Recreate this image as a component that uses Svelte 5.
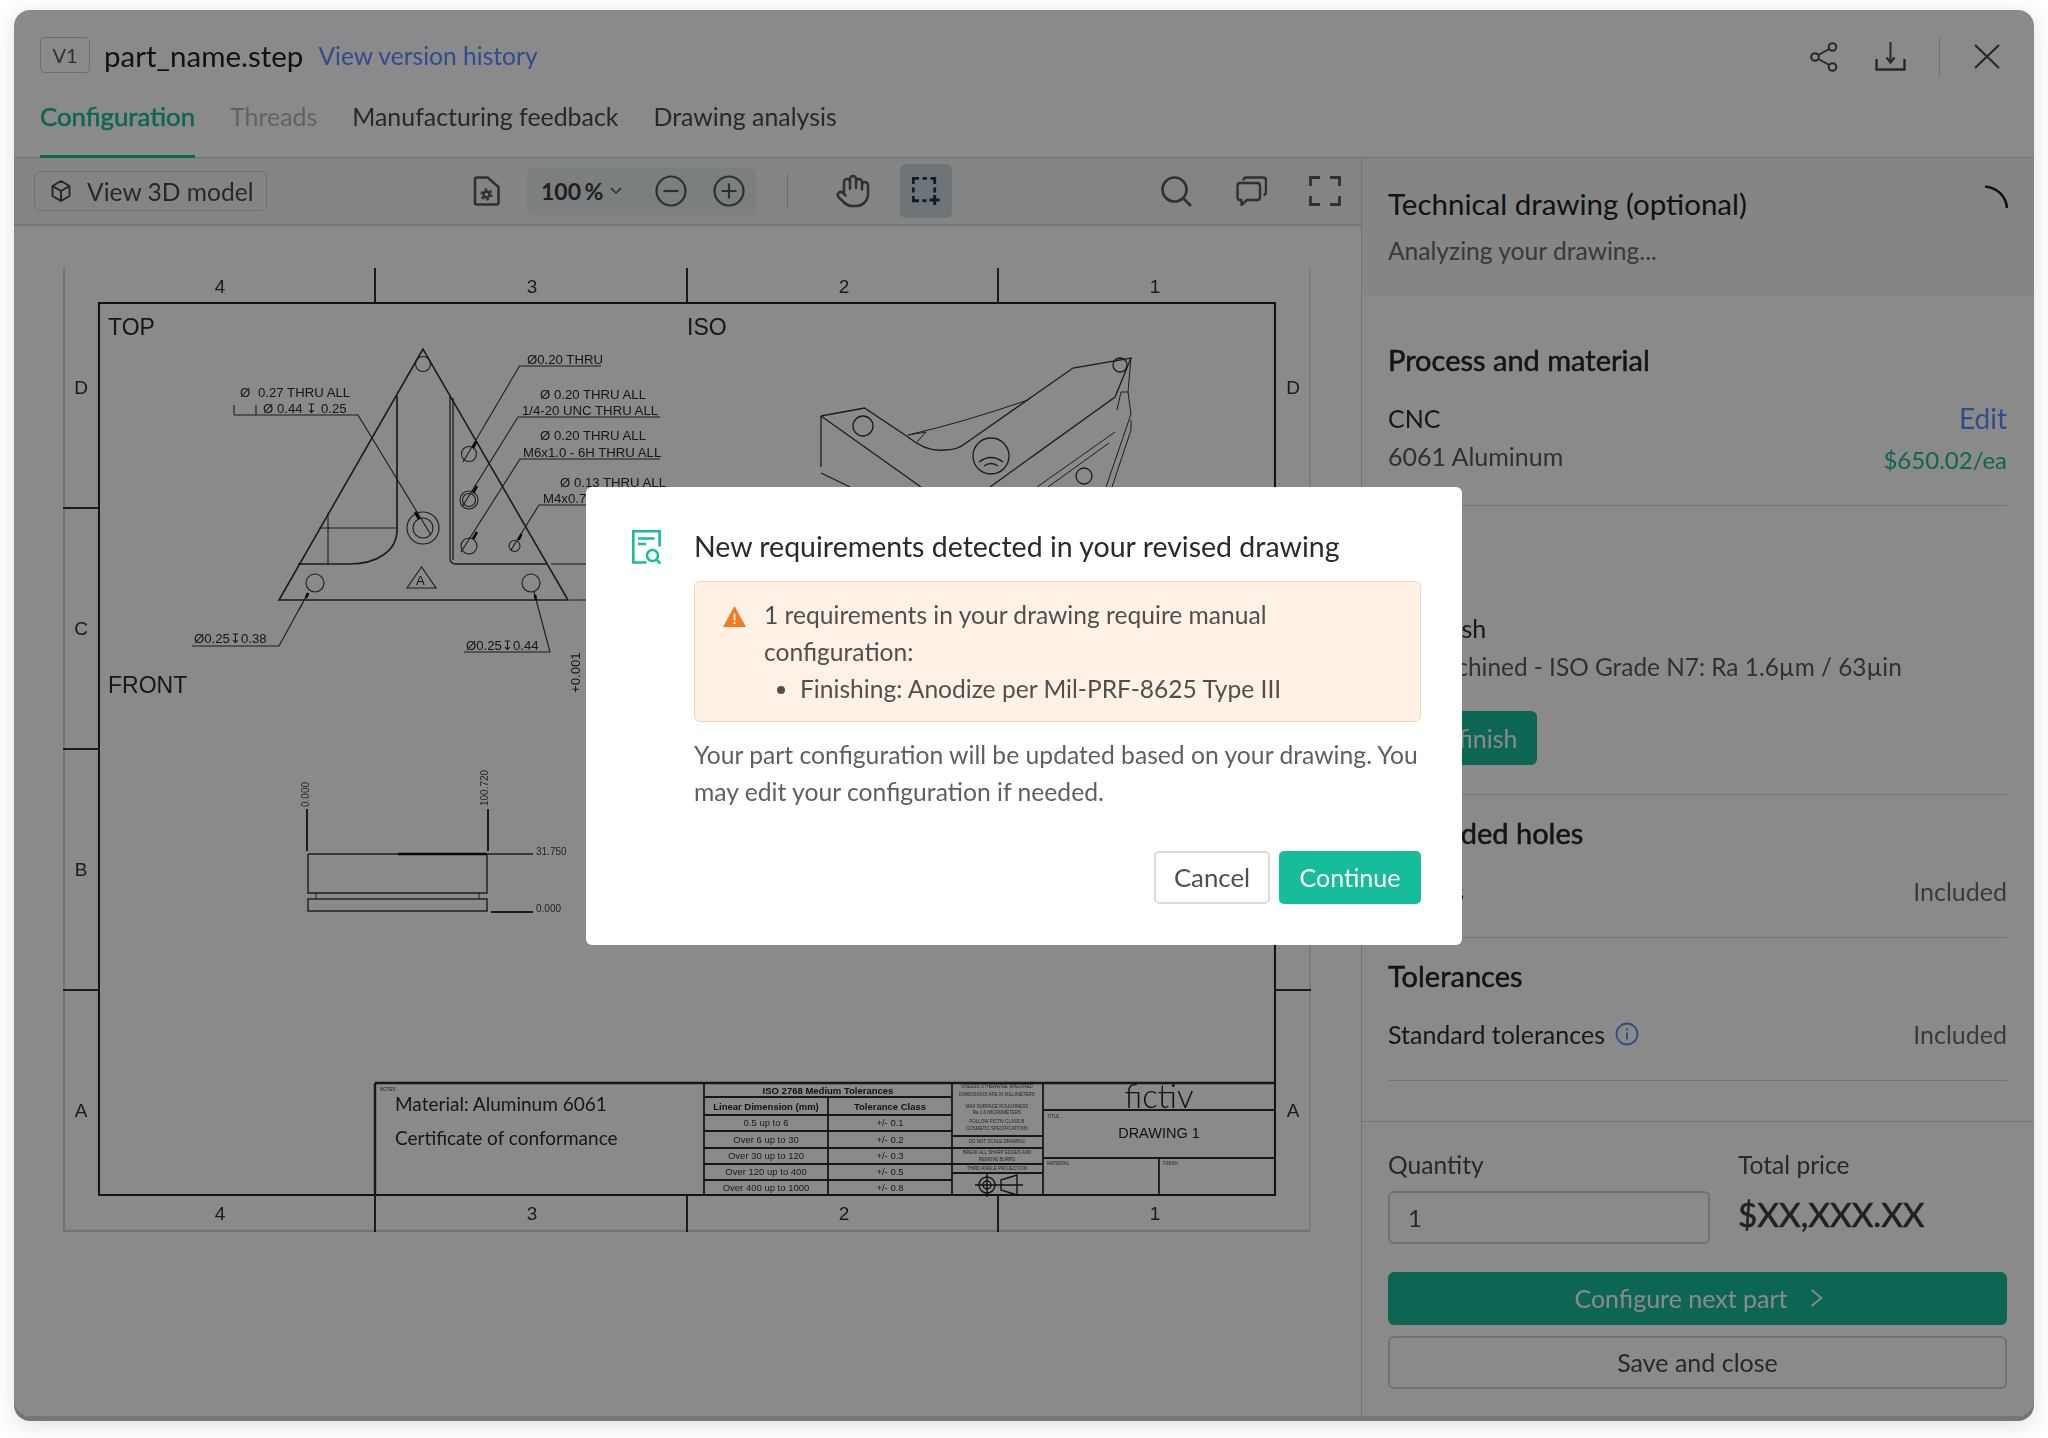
<script>
	const tabs = [
		{ label: 'Configuration', cls: 'active' },
		{ label: 'Threads', cls: 'off' },
		{ label: 'Manufacturing feedback', cls: '' },
		{ label: 'Drawing analysis', cls: '' }
	];
	const tolRows = [
		['0.5 up to 6', '+/- 0.1', 1123],
		['Over 6 up to 30', '+/- 0.2', 1140],
		['Over 30 up to 120', '+/- 0.3', 1156],
		['Over 120 up to 400', '+/- 0.5', 1172],
		['Over 400 up to 1000', '+/- 0.8', 1188]
	];
	const tiny = [
		['UNLESS OTHERWISE SPECIFIED', 1088],
		['DIMENSIONS ARE IN MILLIMETERS', 1096],
		['MAX SURFACE ROUGHNESS', 1108],
		['Ra 1.6 MICROMETERS', 1114],
		['FOLLOW FICTIV CLASS B', 1123],
		['COSMETIC SPECIFICATIONS', 1130],
		['DO NOT SCALE DRAWING', 1143],
		['BREAK ALL SHARP EDGES AND', 1154],
		['REMOVE BURRS', 1161],
		['THIRD ANGLE PROJECTION', 1170]
	];
	const zones = [[220, '4'], [532, '3'], [844, '2'], [1155, '1']];
	const sides = [[387, 'D'], [628, 'C'], [869, 'B'], [1110, 'A']];
</script>

<div class="window">
	<header class="head">
		<div class="title-row">
			<span class="chip">V1</span>
			<span class="filename">part_name.step</span>
			<span class="link history">View version history</span>
			<div class="head-actions">
				<svg class="ic-share" viewBox="0 0 28 30" fill="none" stroke="#4a4a4a" stroke-width="2">
					<circle cx="22.5" cy="5" r="3.8"/><circle cx="5" cy="15" r="3.8"/><circle cx="22.5" cy="25" r="3.8"/>
					<path d="M8.4 13 19.2 7M8.4 17l10.8 6"/>
				</svg>
				<svg class="ic-dl" viewBox="0 0 31 29" fill="none" stroke="#4a4a4a" stroke-width="2">
					<path d="M15.5 0v20"/>
					<path d="M11.5 15.5l4 5 4-5" stroke-width="2.2"/>
					<path d="M1.5 17v10.5h28V17" stroke-width="2.4"/>
				</svg>
				<span class="head-sep"></span>
				<svg class="ic-close" viewBox="0 0 26 25" fill="none" stroke="#4a4a4a" stroke-width="2.2">
					<path d="M1 1l24 23M25 1 1 24"/>
				</svg>
			</div>
		</div>
		<nav class="tabs">
			{#each tabs as t}
				<span class="tab {t.cls}">{t.label}</span>
			{/each}
		</nav>
	</header>

	<div class="body">
		<section class="viewer">
			<div class="toolbar">
				<button class="btn-3d">
					<svg viewBox="0 0 24 24" fill="none" stroke="#444" stroke-width="1.9" stroke-linejoin="round">
						<path d="M12 2l8.5 5v10L12 22l-8.5-5V7zM3.5 7 12 12l8.5-5M12 12v10"/>
					</svg>
					View 3D model
				</button>
				<svg class="ic-doc" viewBox="0 0 27 30" fill="none" stroke="#55595c" stroke-width="2.6" stroke-linejoin="round">
					<path d="M4 1.5h10.5L25.5 11v15.5q0 2-2 2H4q-2 0-2-2v-23q0-2 2-2z"/>
					<circle cx="13.5" cy="18.5" r="3" stroke-width="2.4"/>
					<circle cx="13.5" cy="18.5" r="5.2" stroke-width="2" stroke-dasharray="2.7 2.75"/>
				</svg>
				<div class="zoom-group">
					<span class="pct">100 %</span>
					<svg class="ic-chev" viewBox="0 0 12 8" fill="none" stroke="#555" stroke-width="1.5"><path d="M1 1l5 5 5-5"/></svg>
					<svg class="ic-zoom first" viewBox="0 0 32 32" fill="none" stroke="#55595c" stroke-width="2.2">
						<circle cx="16" cy="16" r="14.5"/><path d="M8.5 16h15"/>
					</svg>
					<svg class="ic-zoom" viewBox="0 0 32 32" fill="none" stroke="#55595c" stroke-width="2.2">
						<circle cx="16" cy="16" r="14.5"/><path d="M8.5 16h15M16 8.5v15"/>
					</svg>
				</div>
				<span class="tool-sep"></span>
				<svg class="ic-hand" viewBox="0 0 24 24" fill="none" stroke="#55595c" stroke-width="1.7" stroke-linecap="round" stroke-linejoin="round">
					<path d="M18 11V6a2 2 0 0 0-4 0M14 10V4a2 2 0 0 0-4 0v2M10 10.5V6a2 2 0 0 0-4 0v8M18 8a2 2 0 1 1 4 0v6a8 8 0 0 1-8 8h-2c-2.8 0-4.5-.86-5.99-2.34l-3.6-3.6a2 2 0 0 1 2.83-2.82L7 15"/>
				</svg>
				<span class="tool-on">
					<svg viewBox="0 0 28 28" fill="none" stroke="#16365c" stroke-width="2.9">
						<path d="M1.3 7V1.3H7M10.5 1.3h4.5M18.5 1.3h4.2V7M1.3 10.5v5M1.3 19v4.7H7M10.5 23.7h4M22.7 10.5v5"/>
						<path d="M22.7 18v10M17.7 23h10"/>
					</svg>
				</span>
				<div class="tool-right">
					<svg class="ic-search" viewBox="0 0 31 31" fill="none" stroke="#55595c" stroke-width="2.6">
						<circle cx="13.5" cy="13.5" r="12"/><path d="M22 22l8 8"/>
					</svg>
					<svg class="ic-comment" viewBox="0 0 31 30" fill="none" stroke="#55595c" stroke-width="2.4" stroke-linejoin="round">
						<path d="M7.5 4.5Q7.5 1.5 10.5 1.5H27Q30 1.5 30 4.5V16Q30 19 27.5 19"/>
						<path d="M4 7H21Q24 7 24 10V21Q24 24 21 24H11L5.5 29V24H4Q1.5 24 1.5 21V10Q1.5 7 4 7Z"/>
					</svg>
					<svg class="ic-expand" viewBox="0 0 32 30" fill="none" stroke="#55595c" stroke-width="2.8">
						<path d="M1.5 10V1.5H11M21 1.5h9.5V10M1.5 20v8.5H11M21 28.5h9.5V20"/>
					</svg>
				</div>
			</div>

			<div class="stage">
				<svg class="sheet" viewBox="63 268 1248 964" fill="none">
					<!-- paper and zones -->
					<path d="M64 268V1231H1310" stroke="#d4d4d4" stroke-width="2.4"/>
					<path d="M1310 268V1231" stroke="#e4e4e4" stroke-width="2"/>
					<rect x="99" y="303" width="1176" height="892" stroke="#222" stroke-width="2"/>
					<path d="M375 268v35M687 268v35M998 268v35M375 1195v37M687 1195v37M998 1195v37M63 508h36M63 749h36M63 990h36M1275 508h36M1275 749h36M1275 990h36" stroke="#333" stroke-width="2"/>
					{#each zones as [x, n]}
						<text class="zone" x={x} y="293">{n}</text>
						<text class="zone" x={x} y="1220">{n}</text>
					{/each}
					{#each sides as [y, n]}
						<text class="zone" x="81" y={y + 7}>{n}</text>
						<text class="zone" x="1293" y={y + 7}>{n}</text>
					{/each}

					<text class="view" x="108" y="335">TOP</text>
					<text class="view" x="108" y="693">FRONT</text>
					<text class="view" x="687" y="335">ISO</text>

					<!-- top view -->
					<g stroke="#333" stroke-width="1.1">
						<path d="M423 349 279 600H568Z" stroke-width="1.6"/>
						<path d="M397 396V530C397 552 375 564 350 564H298" stroke-width="1.7"/>
						<path d="M450 396V558Q450 564 456 564H547M453 398V560" stroke-width="1.3"/>
						<path d="M319 528H397M328 513V564"/>
						<circle cx="423" cy="364" r="7.5"/>
						<circle cx="423" cy="528" r="16"/><circle cx="423" cy="528" r="10"/>
						<circle cx="469" cy="454" r="7.5"/>
						<circle cx="469" cy="500" r="9"/><circle cx="469" cy="500" r="6.5"/>
						<circle cx="469" cy="546" r="8"/><circle cx="514.5" cy="546" r="5.5"/>
						<circle cx="315" cy="583" r="9"/><circle cx="531" cy="583" r="9"/>
						<path d="M421.5 567 407 588H436Z"/>
						<path d="M234 415H358L431 535M234 405V415M256 405V415"/>
						<path d="M601 366H519.5L463 462"/>
						<path d="M660 417H518L462 507M660 459H520L461 552M590 505H539L511 550"/>
						<path d="M192 646H279L308 593 299 610M464 652H550L534 592M551 564H587M570 600H587"/>
						<path d="M476 442l-3 6M477 486l-4 7M477 532l-4 7M521.5 534l-3 6M415 512l4 7M308 593l-2 5M535 595l1 5" stroke="#111" stroke-width="2.6"/>
					</g>
					<g class="note">
						<text x="240" y="397">Ø</text><text x="258" y="397">0.27 THRU ALL</text>
						<text x="263" y="413">Ø 0.44 ↧ 0.25</text>
						<text x="527" y="364">Ø0.20 THRU</text>
						<text x="540" y="399">Ø 0.20 THRU ALL</text>
						<text x="522" y="415">1/4-20 UNC  THRU ALL</text>
						<text x="540" y="440">Ø 0.20 THRU ALL</text>
						<text x="523" y="457">M6x1.0 - 6H THRU ALL</text>
						<text x="560" y="487">Ø 0.13 THRU ALL</text>
						<text x="543" y="503">M4x0.7</text>
						<text x="194" y="643">Ø0.25↧0.38</text>
						<text x="466" y="650">Ø0.25↧0.44</text>
						<text x="416" y="585">A</text>
						<text transform="translate(580 693) rotate(-90)">+0.001</text>
					</g>

					<!-- iso view -->
					<g stroke="#333" stroke-width="1.3">
						<path d="M821 416 864.5 408 908 437Q926 452 944 450 958 450 966 443L1073 368 1131 358 1115 397 990 487M821 416 921 487M821 416V467M821 473 850 487"/>
						<path d="M908 435Q961 423 1028 400M908 435 926 432 917 442" stroke-width="1"/>
						<circle cx="863" cy="426" r="10"/><circle cx="1120" cy="365" r="7"/>
						<circle cx="991" cy="456" r="18"/><path d="M979 462q12-9 24 0M984 466q7-5 14 0"/>
						<circle cx="1084" cy="476" r="8"/>
						<path d="M1131 358 1128 392H1121L1117 410M1128 392 1131 414 1106 487M1131 420V430L1112 487M1115 432 1037 487M1109 443 1048 487" stroke-width="1"/>
					</g>

					<!-- front view -->
					<g stroke="#333" stroke-width="1.4">
						<path d="M308 854H533"/>
						<path d="M398 854H487" stroke="#111" stroke-width="2.4"/>
						<path d="M308 854V893H487V854"/>
						<path d="M316 893V899M479 893V899" stroke-width="1"/>
						<rect x="308" y="899" width="179" height="12"/>
						<path d="M491 912H533M307 809V851M488 809V851" stroke-width="2"/>
					</g>
					<g class="dim">
						<text x="536" y="855">31.750</text>
						<text x="536" y="912">0.000</text>
						<text transform="translate(309 807) rotate(-90)">0.000</text>
						<text transform="translate(488 806) rotate(-90)">100.720</text>
					</g>

					<!-- title block -->
					<g stroke="#2b2b2b" stroke-width="1.8">
						<path d="M375 1083H1275M375 1083V1195" stroke-width="2.4"/>
						<path d="M704 1083V1195M952 1083V1195M1043 1083V1195M828 1097V1195"/>
						<path d="M704 1097H952M704 1115H952M704 1131H952M704 1148H952M704 1164H952M704 1180H952"/>
						<path d="M952 1136H1043M952 1148H1043M952 1164H1043M952 1173H1043M1043 1110H1275M1043 1158H1275M1159 1158V1195"/>
					</g>
					<text class="tiny" x="380" y="1091">NOTES</text>
					<text class="block" x="395" y="1111">Material: Aluminum 6061</text>
					<text class="block" x="395" y="1145">Certificate of conformance</text>
					<text class="th mid" x="828" y="1094">ISO 2768 Medium Tolerances</text>
					<text class="th mid" x="766" y="1110">Linear Dimension (mm)</text>
					<text class="th mid" x="890" y="1110">Tolerance Class</text>
					{#each tolRows as [a, b, y]}
						<text class="td mid" x="766" y={y + 3}>{a}</text>
						<text class="td mid" x="890" y={y + 3}>{b}</text>
					{/each}
					{#each tiny as [s, y]}
						<text class="tiny mid" x="997" y={y}>{s}</text>
					{/each}
					<g stroke="#222" stroke-width="1.4">
						<circle cx="987" cy="1185" r="8"/><circle cx="987" cy="1185" r="4"/>
						<path d="M975 1185h24M987 1173v24M1001 1180l16-5v20l-16-5zM999 1185h24"/>
					</g>
					<text class="logo mid" x="1159" y="1108">fictiv</text>
					<text class="tiny" x="1047" y="1118">TITLE</text>
					<text class="draw mid" x="1159" y="1138">DRAWING 1</text>
					<text class="tiny" x="1047" y="1165">MATERIAL</text>
					<text class="tiny" x="1163" y="1165">FINISH</text>
				</svg>
			</div>
		</section>

		<aside class="panel">
			<div class="analyzing">
				<div class="analyzing-text">
					<h3>Technical drawing (optional)</h3>
					<p>Analyzing your drawing...</p>
				</div>
				<svg class="spinner" viewBox="0 0 24 24" fill="none" stroke="#222" stroke-width="2.6">
					<path d="M1 1.5C13 2.5 22 11 23 23"/>
				</svg>
			</div>

			<div class="sections">
				<section class="sec first">
					<h4>Process and material</h4>
					<div class="row"><span class="strong">CNC</span><span class="link edit">Edit</span></div>
					<div class="row second"><span class="sub">6061 Aluminum</span><span class="price">$650.02/ea</span></div>
				</section>
				<section class="sec finish">
					<h4>Finish</h4>
					<div class="row"><span class="strong">No finish</span></div>
					<div class="row second"><span class="sub narrow">As-machined - ISO Grade N7: Ra 1.6µm / 63µin</span></div>
					<button class="btn-finish">Add finish</button>
				</section>
				<section class="sec">
					<h4>Threaded holes</h4>
					<div class="row"><span class="strong">Details</span><span class="muted">Included</span></div>
				</section>
				<section class="sec">
					<h4>Tolerances</h4>
					<div class="row">
						<span class="strong with-icon">Standard tolerances
							<svg class="ic-info" viewBox="0 0 24 24" fill="none" stroke="#5a8cff" stroke-width="1.8">
								<circle cx="12" cy="12" r="10.5"/><path d="M12 10.5v7"/><path d="M12 6.5v2"/>
							</svg>
						</span>
						<span class="muted">Included</span>
					</div>
				</section>
			</div>

			<div class="foot">
				<div class="qty">
					<div>
						<div class="lbl">Quantity</div>
						<div class="input">1</div>
					</div>
					<div>
						<div class="lbl">Total price</div>
						<div class="total">$XX,XXX.XX</div>
					</div>
				</div>
				<button class="btn-next">Configure next part
					<svg viewBox="0 0 13 18" fill="none" stroke="#fff" stroke-width="1.8"><path d="M1.5 1l10 8-10 8"/></svg>
				</button>
				<button class="btn-save">Save and close</button>
			</div>
		</aside>
	</div>

	<div class="scrim">
		<div class="modal">
			<svg class="ic-req" viewBox="0 0 29 34" fill="none" stroke="#17bd9a" stroke-width="2.6">
				<path d="M14.5 32.5H1.3V1.3H27.6V16.5"/>
				<path d="M6 8.5H22.5M6 14H14"/>
				<circle cx="20.5" cy="25.5" r="5.5"/>
				<path d="M24.5 29.5l4 4.3"/>
			</svg>
			<div class="modal-main">
				<h2>New requirements detected in your revised drawing</h2>
				<div class="alert">
					<svg class="ic-warn" viewBox="0 0 23 21">
						<path d="M11.5 0 23 21H0Z" fill="#f47b20"/>
						<path d="M11.5 7.5v7M11.5 16v2" stroke="#fff1e6" stroke-width="1.8"/>
					</svg>
					<div class="alert-text">
						1 requirements in your drawing require manual configuration:
						<ul><li>Finishing: Anodize per Mil-PRF-8625 Type III</li></ul>
					</div>
				</div>
				<p class="note-text">Your part configuration will be updated based on your drawing. You may edit your configuration if needed.</p>
				<div class="actions">
					<button class="btn-cancel">Cancel</button>
					<button class="btn-continue">Continue</button>
				</div>
			</div>
		</div>
	</div>
</div>

<style>
	:global(body) {
		background: #fff;
		font-family: 'Lato', 'Open Sans', sans-serif;
		color: #262626;
	}

	button {
		font-family: inherit;
		cursor: pointer;
	}

	h2, h3, h4, p {
		margin: 0;
		font-weight: 400;
	}

	.window {
		position: relative;
		width: 2020px;
		height: 1411px;
		margin: 10px 14px 17px;
		background: #fff;
		border-radius: 16px;
		overflow: hidden;
		box-shadow: inset 0 -5px 0 #dadada;
		display: flex;
		flex-direction: column;
		filter: drop-shadow(0 4px 10px rgba(0, 0, 0, 0.12));
	}

	/* header */
	.head {
		padding: 27px 0 0 26px;
		border-bottom: 1px solid #d5d5d5;
	}

	.title-row {
		display: flex;
		align-items: center;
		height: 36px;
	}

	.chip {
		box-sizing: border-box;
		width: 50px;
		height: 36px;
		line-height: 34px;
		text-align: center;
		border: 1.5px solid #c8c8c8;
		border-radius: 5px;
		font-size: 20px;
		color: #5a5a5a;
	}

	.filename {
		margin-left: 14px;
		font-size: 29.5px;
		color: #222;
	}

	.link {
		color: #5a8cff;
	}

	.history {
		margin-left: 15px;
		font-size: 24.6px;
	}

	.head-actions {
		margin-left: auto;
		display: flex;
		align-items: center;
		padding: 3px 34px 0 0;
	}

	.ic-share { width: 28px; height: 30px; }
	.ic-dl { width: 31px; height: 29px; margin-left: 37px; }
	.ic-close { width: 26px; height: 25px; }

	.head-sep {
		width: 1px;
		height: 40px;
		background: #d5d5d5;
		margin: 0 34px 0 33px;
	}

	.tabs {
		display: flex;
		gap: 35px;
		margin-top: 28px;
		margin-bottom: -1px;
	}

	.tab {
		font-size: 24.9px;
		line-height: 30px;
		padding-bottom: 24px;
		border-bottom: 3px solid transparent;
		color: #4a4a4a;
	}

	.tab.active {
		color: #17bd9a;
		border-bottom-color: #17bd9a;
		font-size: 25.8px;
		-webkit-text-stroke: 0.5px #17bd9a;
	}

	.tab.off {
		color: #b5b5b5;
	}

	/* body */
	.body {
		flex: 1;
		display: grid;
		grid-template-columns: 1347px 673px;
		min-height: 0;
	}

	.viewer {
		min-width: 0;
	}

	.toolbar {
		box-sizing: border-box;
		height: 68px;
		display: flex;
		align-items: center;
		padding: 0 20px;
		background: #f2f6f6;
		border-bottom: 2px solid #d8d8d8;
	}

	.btn-3d {
		box-sizing: border-box;
		width: 233px;
		height: 40px;
		display: flex;
		align-items: center;
		gap: 14px;
		padding: 0 0 0 14px;
		font-size: 24.6px;
		color: #4a4a4a;
		background: transparent;
		border: 1px solid #ccd0d0;
		border-radius: 6px;
	}

	.btn-3d svg { width: 24px; height: 24px; }

	.ic-doc { width: 27px; height: 30px; margin-left: 206px; }

	.zoom-group {
		display: flex;
		align-items: center;
		width: 229px;
		height: 47px;
		box-sizing: border-box;
		padding-left: 14px;
		margin-left: 27px;
		background: #e6eaeb;
		border-radius: 6px;
	}

	.pct {
		font-size: 23px;
		font-weight: 700;
		color: #3a3a3a;
		word-spacing: -2px;
		white-space: nowrap;
	}

	.ic-chev { width: 12px; height: 8px; margin-left: 7px; }
	.ic-zoom { width: 32px; height: 32px; margin-left: 26px; }
	.ic-zoom.first { margin-left: 33px; }

	.tool-sep {
		width: 1px;
		height: 34px;
		background: #c8cccc;
		margin-left: 31px;
	}

	.ic-hand { width: 36px; height: 36px; margin-left: 47px; }

	.tool-on {
		display: flex;
		align-items: center;
		justify-content: center;
		width: 52px;
		height: 54px;
		margin-left: 29px;
		background: #cbd6de;
		border-radius: 6px;
	}

	.tool-on svg { width: 28px; height: 28px; }

	.tool-right {
		margin-left: auto;
		display: flex;
		align-items: center;
	}

	.ic-search { width: 31px; height: 31px; }
	.ic-comment { width: 31px; height: 30px; margin-left: 44px; }
	.ic-expand { width: 32px; height: 30px; margin-left: 42px; }

	.stage {
		padding: 42px 0 0 49px;
	}

	.sheet {
		display: block;
		width: 1248px;
		height: 964px;
		filter: blur(0.5px);
	}

	.zone { font: 19px 'Liberation Sans', sans-serif; fill: #333; text-anchor: middle; }
	.view { font: 23px 'Liberation Sans', sans-serif; fill: #2b2b2b; }
	.note text { font: 13.2px 'Liberation Sans', sans-serif; fill: #2b2b2b; }
	.dim text { font: 10px 'Liberation Sans', sans-serif; fill: #444; }
	.block { font-size: 19px; fill: #2b2b2b; }
	.mid { text-anchor: middle; }
	.th { font: 700 9.5px 'Liberation Sans', sans-serif; fill: #222; }
	.td { font: 9.5px 'Liberation Sans', sans-serif; fill: #333; }
	.tiny { font: 4.5px 'Liberation Sans', sans-serif; fill: #444; }
	.logo { font-size: 33px; font-weight: 300; fill: #222; }
	.draw { font: 14.5px 'Liberation Sans', sans-serif; fill: #222; }

	/* right panel */
	.panel {
		min-height: 0;
		display: flex;
		flex-direction: column;
		border-left: 1px solid #d5d5d5;
		padding-bottom: 5px;
	}

	.analyzing {
		display: flex;
		justify-content: space-between;
		height: 137px;
		box-sizing: border-box;
		padding: 30px 26px 0 26px;
		background: #f6f6f6;
	}

	.analyzing h3 {
		font-size: 29.5px;
		line-height: 32px;
		color: #222;
	}

	.analyzing p {
		margin-top: 16px;
		font-size: 24.6px;
		line-height: 30px;
		color: #6a6a6a;
	}

	.spinner {
		width: 24px;
		height: 24px;
		margin-top: -3px;
	}

	.sections {
		padding: 0 27px 0 26px;
	}

	.sec {
		padding: 23px 0 31px;
		border-bottom: 1px solid #d5d5d5;
	}

	.sec.first {
		padding-top: 50px;
		padding-bottom: 34px;
	}

	.sec.finish {
		padding-top: 49px;
		padding-bottom: 29px;
	}

	.sec h4 {
		font-size: 29px;
		line-height: 30px;
		color: #262626;
		-webkit-text-stroke: 0.5px #262626;
	}

	.row {
		display: flex;
		justify-content: space-between;
		align-items: center;
		height: 30px;
		margin-top: 28px;
		font-size: 25px;
	}

	.row.second {
		margin-top: 8px;
	}

	.strong { color: #2d2d2d; }
	.sub { color: #5a5a5a; }
	.sub.narrow { font-size: 24.4px; }
	.muted { color: #6e6e6e; }
	.edit { font-size: 28px; }
	.price { color: #17bd9a; font-size: 24px; position: relative; top: 3px; }

	.with-icon {
		display: flex;
		align-items: center;
		gap: 10px;
	}

	.ic-info { width: 24px; height: 24px; }

	.btn-finish {
		display: block;
		width: 149px;
		height: 54px;
		margin-top: 30px;
		font-size: 25px;
		color: #fff;
		background: #17bd9a;
		border: 0;
		border-radius: 6px;
	}

	.foot {
		margin-top: auto;
		padding: 28px 27px 27px 26px;
		border-top: 1px solid #d5d5d5;
	}

	.qty {
		display: grid;
		grid-template-columns: 322px 1fr;
		column-gap: 28px;
	}

	.lbl {
		font-size: 24.6px;
		line-height: 30px;
		color: #4a4a4a;
	}

	.input {
		box-sizing: border-box;
		height: 53px;
		margin-top: 11px;
		padding-left: 18px;
		line-height: 49px;
		font-size: 24px;
		color: #4a4a4a;
		border: 2px solid #cfcfcf;
		border-radius: 6px;
	}

	.total {
		margin-top: 13px;
		font-size: 33.4px;
		line-height: 42px;
		color: #3e3e3e;
		-webkit-text-stroke: 0.6px #3e3e3e;
	}

	.btn-next,
	.btn-save {
		display: flex;
		align-items: center;
		justify-content: center;
		width: 100%;
		height: 53px;
		font-size: 25px;
		border-radius: 6px;
		padding-bottom: 2px;
	}

	.btn-next {
		gap: 22px;
		margin-top: 28px;
		color: #fff;
		background: #17bd9a;
		border: 0;
		padding-right: 4px;
	}

	.btn-next svg { width: 13px; height: 18px; }

	.btn-save {
		margin-top: 11px;
		color: #4a4a4a;
		background: transparent;
		border: 2px solid #cfcfcf;
	}

	/* modal */
	.scrim {
		position: absolute;
		inset: 0;
		display: flex;
		align-items: center;
		justify-content: center;
		background: rgba(0, 0, 0, 0.46);
	}

	.modal {
		box-sizing: border-box;
		width: 876px;
		height: 458px;
		display: flex;
		padding: 43px 41px 0 46px;
		background: #fff;
		border-radius: 6px;
	}

	.ic-req {
		flex: none;
		width: 29px;
		height: 34px;
	}

	.modal-main {
		margin-left: 33px;
		width: 727px;
	}

	.modal h2 {
		margin-top: -1px;
		font-size: 28.5px;
		line-height: 34px;
		color: #2a2a2a;
	}

	.alert {
		box-sizing: border-box;
		display: flex;
		height: 141px;
		margin-top: 18px;
		padding: 14px 20px 0 28px;
		background: #fff1e6;
		border: 1.5px solid #fdd3ae;
		border-radius: 6px;
	}

	.ic-warn {
		flex: none;
		width: 23px;
		height: 21px;
		margin-top: 10px;
	}

	.alert-text {
		margin-left: 18px;
		font-size: 24.6px;
		line-height: 37px;
		color: #4f4f4f;
	}

	.alert-text ul {
		margin: 0;
		padding-left: 36px;
	}

	.note-text {
		margin-top: 14px;
		font-size: 24.7px;
		line-height: 37px;
		color: #5f5f5f;
	}

	.actions {
		display: flex;
		justify-content: flex-end;
		gap: 9px;
		margin-top: 41px;
	}

	.btn-cancel,
	.btn-continue {
		height: 53px;
		font-size: 25px;
		border-radius: 5px;
	}

	.btn-cancel {
		width: 116px;
		font-size: 25.8px;
		color: #4f4f4f;
		background: #fff;
		border: 2px solid #dcdcdc;
	}

	.btn-continue {
		width: 142px;
		color: #fff;
		background: #17bd9a;
		border: 0;
	}
</style>
